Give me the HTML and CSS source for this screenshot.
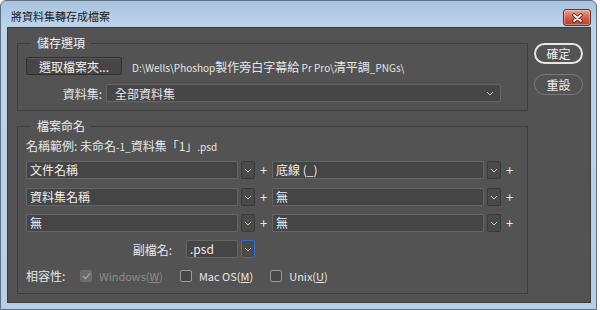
FILE: index.html
```html
<!DOCTYPE html>
<html lang="zh-Hant">
<head>
  <meta charset="UTF-8" />
  <title>將資料集轉存成檔案</title>
  <link rel="stylesheet" href="styles.css">
</head>
<body>

  <div class="window">
    <div class="titlebar">
      <span class="title">將資料集轉存成檔案</span>
      <button class="close">
        <svg width="13" height="10" viewBox="0 0 13 10">
          <path d="M3 2l7 6M10 2l-7 6" stroke="#3a1f1a" stroke-width="3.4" stroke-linecap="round"/>
          <path d="M3 2l7 6M10 2l-7 6" stroke="#ffffff" stroke-width="1.8" stroke-linecap="round"/>
        </svg>
      </button>
    </div>

    <div class="content">
      <div class="main">
        <fieldset class="group group-save">
          <legend>儲存選項</legend>
          <div class="row">
            <button class="btn-folder">選取檔案夾...</button>
            <span class="path"><span class="lat">D:\Wells\Phoshop</span>製作旁白字幕給<span class="lat"> Pr Pro\</span>清平調<span class="lat">_PNGs\</span></span>
          </div>
          <div class="row row-set">
            <span class="label label-set">資料集:</span>
            <div class="select">
              <span>全部資料集</span>
              <svg width="8" height="5" viewBox="0 0 8 5"><path d="M1 1l3 3 3-3" fill="none" stroke="#c8c8c8"/></svg>
            </div>
          </div>
        </fieldset>

        <fieldset class="group group-name">
          <legend>檔案命名</legend>
          <div class="sample">名稱範例: 未命名<span class="lat">-1_</span>資料集「1」<span class="lat">.psd</span></div>

          <div class="row name-row first">
            <div class="field">文件名稱</div>
            <span class="drop"><svg width="8" height="5" viewBox="0 0 8 5"><path d="M1 1l3 3 3-3" fill="none" stroke="#c8c8c8"/></svg></span>
            <span class="plus">+</span>
            <div class="field">底線 (_)</div>
            <span class="drop"><svg width="8" height="5" viewBox="0 0 8 5"><path d="M1 1l3 3 3-3" fill="none" stroke="#c8c8c8"/></svg></span>
            <span class="plus">+</span>
          </div>
          <div class="row name-row">
            <div class="field">資料集名稱</div>
            <span class="drop"><svg width="8" height="5" viewBox="0 0 8 5"><path d="M1 1l3 3 3-3" fill="none" stroke="#c8c8c8"/></svg></span>
            <span class="plus">+</span>
            <div class="field">無</div>
            <span class="drop"><svg width="8" height="5" viewBox="0 0 8 5"><path d="M1 1l3 3 3-3" fill="none" stroke="#c8c8c8"/></svg></span>
            <span class="plus">+</span>
          </div>
          <div class="row name-row last">
            <div class="field">無</div>
            <span class="drop"><svg width="8" height="5" viewBox="0 0 8 5"><path d="M1 1l3 3 3-3" fill="none" stroke="#c8c8c8"/></svg></span>
            <span class="plus">+</span>
            <div class="field">無</div>
            <span class="drop"><svg width="8" height="5" viewBox="0 0 8 5"><path d="M1 1l3 3 3-3" fill="none" stroke="#c8c8c8"/></svg></span>
            <span class="plus">+</span>
          </div>

          <div class="row ext-row">
            <span class="label label-ext">副檔名:</span>
            <div class="field field-ext">.psd</div>
            <span class="drop drop-focus"><svg width="8" height="5" viewBox="0 0 8 5"><path d="M1 1l3 3 3-3" fill="none" stroke="#c8c8c8"/></svg></span>
          </div>

          <div class="row compat-row">
            <span class="label label-compat">相容性:</span>
            <label class="check disabled">
              <span class="box"><svg width="9" height="8" viewBox="0 0 9 8"><path d="M1 4l2.5 2.5L8 1.5" fill="none" stroke="#9c9c9c" stroke-width="1.6"/></svg></span>
              <span>Windows(<u>W</u>)</span>
            </label>
            <label class="check">
              <span class="box"></span>
              <span>Mac OS(<u>M</u>)</span>
            </label>
            <label class="check">
              <span class="box"></span>
              <span>Unix(<u>U</u>)</span>
            </label>
          </div>
        </fieldset>
      </div>

      <div class="side">
        <button class="pill pill-default">確定</button>
        <button class="pill">重設</button>
      </div>
    </div>
  </div>

</body>
</html>
```

FILE: styles.css
```css
body {
  margin: 0;
  background-color: #ffffff;
  font-family: "Noto Sans CJK TC", "Noto Sans", sans-serif;
}

.window {
  box-sizing: border-box;
  width: 597px;
  height: 310px;
  border: 1px solid #5d6f84;
  border-radius: 6px 6px 0 0;
  padding: 0 5px 6px 6px;
  background: linear-gradient(#a9c3de, #bdd4ec 26px, #b6cee8);
}

.titlebar {
  display: flex;
  justify-content: space-between;
  align-items: flex-start;
  height: 26px;
}

.title {
  font-size: 11px;
  color: #1c1c1c;
  margin: 8px 0 0 4px;
  line-height: 14px;
}

.close {
  width: 28px;
  height: 17px;
  margin: 8px 0 0 0;
  padding: 0;
  border: 1px solid #6e2b21;
  border-radius: 3px;
  background: linear-gradient(#e9a595, #d2614e 50%, #b93d2b);
  box-shadow: inset 0 0 0 1px rgba(255, 255, 255, 0.35);
  display: flex;
  align-items: center;
  justify-content: center;
}

.content {
  box-sizing: border-box;
  height: 276px;
  background-color: #535353;
  border: 1px solid #3d3d3d;
  display: flex;
  gap: 6px;
  padding: 8px 0 0 9px;
  color: #e6e6e6;
  font-size: 12px;
}

.main {
  width: 511px;
  display: flex;
  flex-direction: column;
  gap: 8px;
}

.group {
  margin: 0;
  padding: 0 9px 8px 8px;
  border: 1px solid #3e3e3e;
}

.group legend {
  margin-left: 5px;
  padding: 0 6px 0 6px;
  line-height: 14px;
  color: #f0f0f0;
}

.lat {
  font-size: 10px;
}

.row {
  display: flex;
  align-items: center;
  height: 18px;
}

.group-save .row {
  margin-top: 7px;
}

.group-save .row-set {
  margin-top: 9px;
}

.btn-folder {
  width: 96px;
  height: 18px;
  padding: 0;
  font-family: inherit;
  font-size: 12px;
  color: #f0f0f0;
  background-color: #464646;
  border: 1px solid #2f2f2f;
  border-radius: 2px;
  box-shadow: inset 0 1px 0 #5a5a5a;
}

.path {
  margin-left: 10px;
  color: #e6e6e6;
}

.label {
  text-align: right;
  color: #e6e6e6;
}

.label-set {
  width: 76px;
  margin-right: 4px;
}

.select {
  box-sizing: border-box;
  width: 395px;
  height: 18px;
  display: flex;
  align-items: center;
  justify-content: space-between;
  padding: 0 6px 0 8px;
  background-color: #464646;
  border: 1px solid #656565;
  border-radius: 2px;
}

.sample {
  margin-top: 6px;
  height: 14px;
  line-height: 14px;
}

.name-row {
  margin-top: 9px;
}

.name-row.first {
  margin-top: 8px;
}

.name-row.last {
  margin-top: 8px;
}

.field {
  box-sizing: border-box;
  width: 212px;
  height: 18px;
  line-height: 16px;
  padding: 0 3px;
  background-color: #454545;
  border: 1px solid #656565;
  border-radius: 1px;
  color: #eeeeee;
}

.drop {
  box-sizing: border-box;
  width: 14px;
  height: 18px;
  margin-left: 3px;
  display: flex;
  align-items: center;
  justify-content: center;
  background-color: #4a4a4a;
  border: 1px solid #393939;
  border-radius: 2px;
}

.plus {
  width: 17px;
  line-height: 18px;
  text-align: center;
  font-size: 13px;
  color: #e6e6e6;
}

.ext-row {
  margin-top: 8px;
}

.label-ext {
  width: 146px;
  margin-right: 14px;
}

.field-ext {
  width: 52px;
}

.drop-focus {
  border: 1px solid #2f6fd0;
}

.compat-row {
  margin-top: 9px;
  line-height: 14px;
}

.label-compat {
  width: 54px;
  text-align: left;
}

.check {
  display: flex;
  align-items: center;
  gap: 7px;
  margin-right: 17px;
  font-size: 11px;
  color: #e6e6e6;
}

.check.disabled {
  color: #8c8c8c;
}

.box {
  box-sizing: border-box;
  width: 12px;
  height: 12px;
  display: flex;
  align-items: center;
  justify-content: center;
  border: 1px solid #9a9a9a;
  border-radius: 2px;
  background-color: #474747;
}

.check.disabled .box {
  border-color: #6e6e6e;
  background-color: #6a6a6a;
}

.side {
  display: flex;
  flex-direction: column;
  gap: 10px;
  padding-top: 7px;
}

.pill {
  box-sizing: border-box;
  width: 49px;
  height: 21px;
  padding: 0;
  font-family: inherit;
  font-size: 12px;
  color: #f0f0f0;
  background-color: #535353;
  border: 1px solid #7a7a7a;
  border-radius: 11px;
}

.pill-default {
  border: 2px solid #e6e6e6;
}
```
